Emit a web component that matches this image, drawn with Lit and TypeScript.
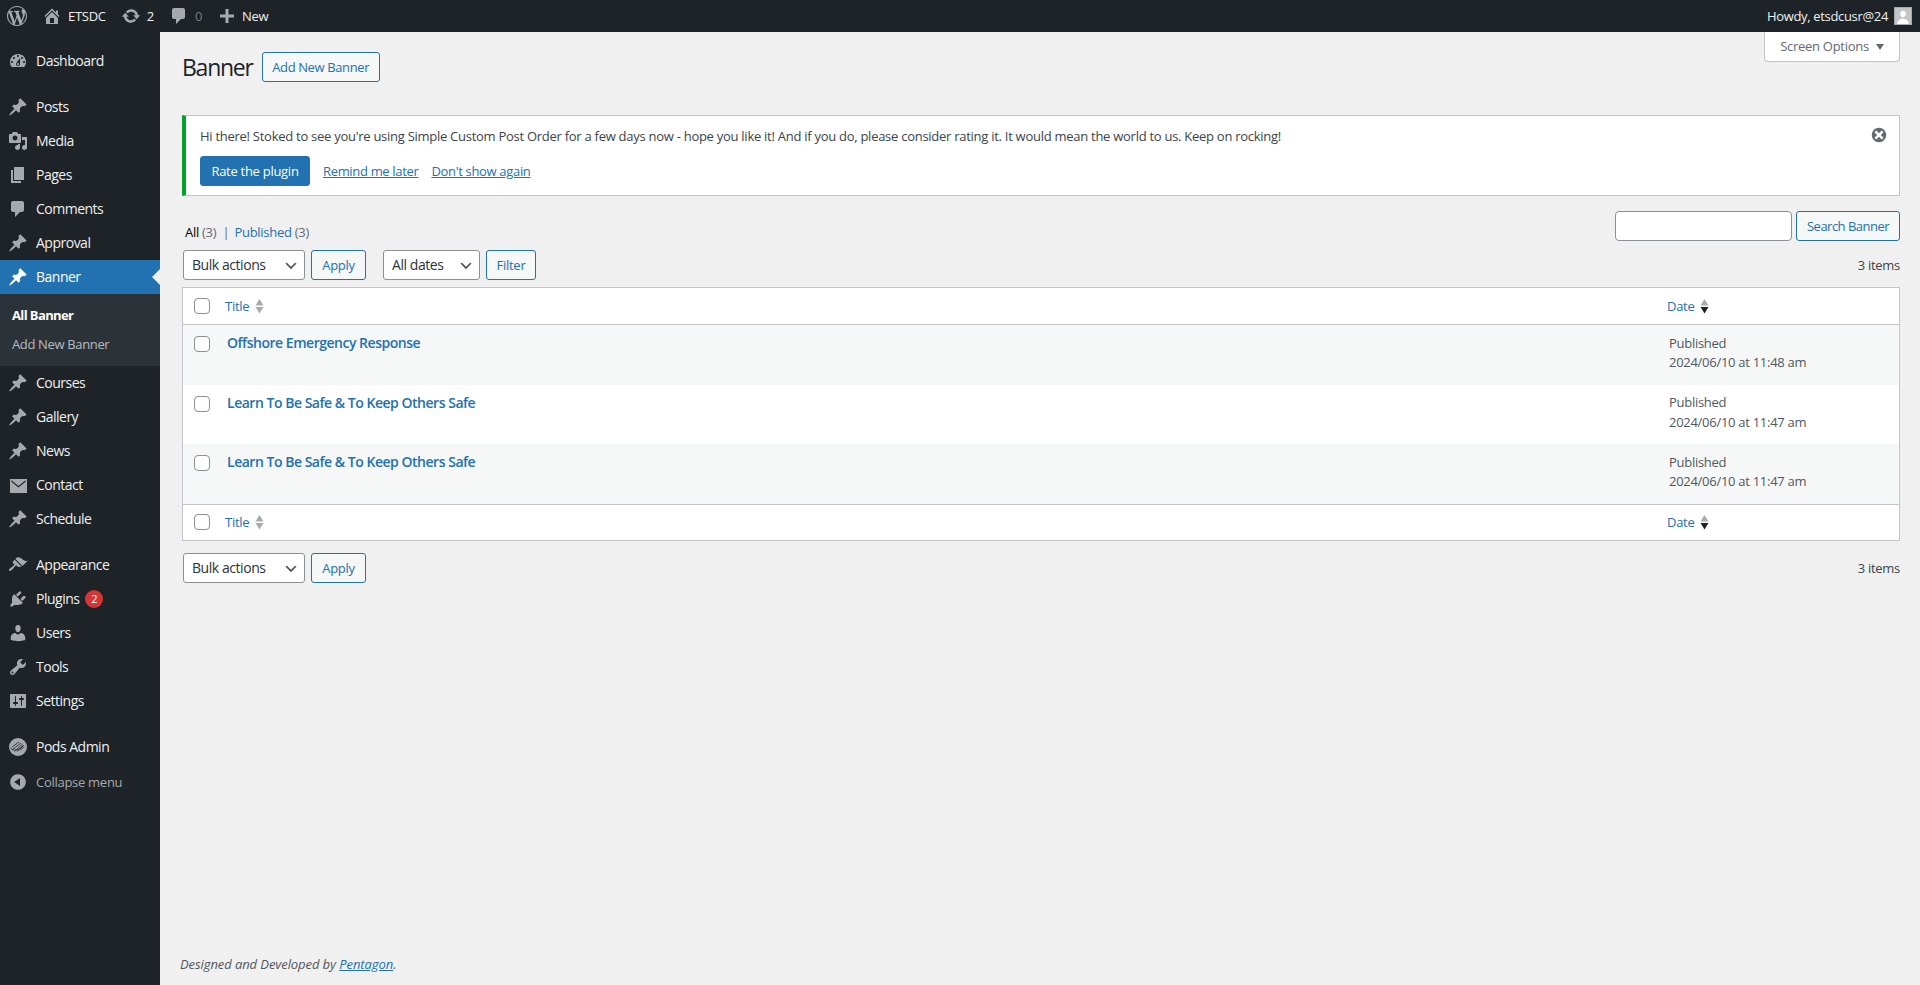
import { LitElement, html, css } from "lit";
import { customElement } from "lit/decorators.js";

const PIN = "M10.44 3.02l1.82-1.82 6.36 6.35-1.83 1.82c-1.05-.68-2.48-.57-3.41.36l-.75.75c-.92.93-1.04 2.35-.35 3.41l-1.83 1.82-2.41-2.41-2.8 2.79c-.42.42-3.38 2.71-3.8 2.29s1.86-3.39 2.28-3.81l2.79-2.79L4.1 9.36l1.83-1.82c1.05.69 2.48.57 3.4-.36l.75-.75c.93-.92 1.05-2.35.36-3.41z";
const I: Record<string, string> = {
  pin: PIN,
  media: "M13 11V4c0-.55-.45-1-1-1h-1.67L9 1H5L3.67 3H2c-.55 0-1 .45-1 1v7c0 .55.45 1 1 1h10c.55 0 1-.45 1-1zM7 4.5c1.38 0 2.5 1.12 2.5 2.5S8.38 9.5 7 9.5 4.5 8.38 4.5 7 5.62 4.5 7 4.5zM14 6h5v10.5c0 1.38-1.12 2.5-2.5 2.5S14 17.88 14 16.5s1.12-2.5 2.5-2.5c.17 0 .34.02.5.05V9h-3V6zm-4 8.05V13h2v3.5c0 1.38-1.12 2.5-2.5 2.5S7 17.88 7 16.5 8.12 14 9.5 14c.17 0 .34.02.5.05z",
  page: "M6 15V2h10v13H6zm-1 1h8v2H3V5h2v11z",
  comment: "M5 2h9c1.1 0 2 .9 2 2v7c0 1.1-.9 2-2 2h-2l-5 5v-5H5c-1.1 0-2-.9-2-2V4c0-1.1.9-2 2-2z",
  dash: "M3.76 16h12.48c1.1-1.37 1.76-3.11 1.76-5 0-4.42-3.58-8-8-8s-8 3.58-8 8c0 1.89.66 3.63 1.76 5zM10 4c.55 0 1 .45 1 1s-.45 1-1 1-1-.45-1-1 .45-1 1-1zM6 6c.55 0 1 .45 1 1s-.45 1-1 1-1-.45-1-1 .45-1 1-1zm8 0c.55 0 1 .45 1 1s-.45 1-1 1-1-.45-1-1 .45-1 1-1zm-5.37 5.55L12 7v6c0 1.1-.9 2-2 2s-2-.9-2-2c0-.57.24-1.08.63-1.45zM4 10c.55 0 1 .45 1 1s-.45 1-1 1-1-.45-1-1 .45-1 1-1zm12 0c.55 0 1 .45 1 1s-.45 1-1 1-1-.45-1-1 .45-1 1-1zm-5 3c0-.55-.45-1-1-1s-1 .45-1 1 .45 1 1 1 1-.45 1-1z",
  mail: "M2 4h17v14H2zM3.4 5.200 10.500 11 17.600 5.200V6.800L10.500 12.600 3.400 6.800z",
  brush: "M14.48 11.06L7.41 3.99l1.5-1.5c.5-.56 2.3-.47 3.51.32 1.21.8 1.43 1.28 2.91 2.1 1.18.64 2.45 1.26 4.45.85zm-.71.71L6.7 4.7 4.93 6.47c-.39.39-.39 1.02 0 1.41l1.06 1.06c.39.39.39 1.03 0 1.42-.6.6-1.43 1.11-2.21 1.69-.35.26-.7.53-1.01.84C1.43 13.23.4 14.79 1.2 15.6c.8.8 2.36-.23 3.71-1.57.31-.31.58-.66.85-1.02.57-.78 1.08-1.61 1.69-2.21.39-.39 1.02-.39 1.41 0l1.06 1.06c.39.39 1.02.39 1.41 0z",
  plug: "M13.11 4.36L9.87 7.6 8 5.73l3.24-3.24c.35-.34 1.05-.2 1.56.32.52.51.66 1.21.31 1.55zm-8 1.77l.91-1.12 9.01 9.01-1.19.84c-.71.71-2.63 1.16-3.82 1.16H6.14L4.9 17.26c-.59.59-1.54.59-2.12 0-.59-.58-.59-1.53 0-2.12l1.24-1.24v-3.88c0-1.13.4-3.19 1.09-3.89zm7.26 3.97l3.24-3.24c.34-.35 1.04-.21 1.55.31.52.51.66 1.21.31 1.55l-3.24 3.25z",
  user: "M10 9.25c-2.27 0-2.73-3.44-2.73-3.44C7 4.02 7.82 2 9.97 2c2.16 0 2.98 2.02 2.71 3.81 0 0-.41 3.44-2.68 3.44zm0 2.57L12.72 10c2.39 0 4.52 2.33 4.52 4.53v2.49s-3.65 1.13-7.24 1.13c-3.65 0-7.24-1.13-7.24-1.13v-2.49c0-2.25 1.94-4.48 4.47-4.48z",
  tool: "M16.68 9.77c-1.34 1.34-3.3 1.67-4.95.99l-5.41 6.52c-.99.99-2.59.99-3.58 0s-.99-2.59 0-3.57l6.52-5.42c-.68-1.65-.35-3.61.99-4.95 1.28-1.28 3.12-1.62 4.72-1.06l-2.89 2.89 2.82 2.82 2.86-2.87c.53 1.58.18 3.39-1.08 4.65zM3.81 16.21c.4.39 1.04.39 1.43 0 .4-.4.4-1.04 0-1.43-.39-.4-1.03-.4-1.43 0-.39.39-.39 1.03 0 1.43z",
  gear: "M18 16V4c0-.55-.45-1-1-1H3c-.55 0-1 .45-1 1v12c0 .55.45 1 1 1h14c.55 0 1-.45 1-1zM8 11h1c.55 0 1 .45 1 1s-.45 1-1 1H8v1.5c0 .28-.22.5-.5.5s-.5-.22-.5-.5V13H6c-.55 0-1-.45-1-1s.45-1 1-1h1V5.5c0-.28.22-.5.5-.5s.5.22.5.5V11zm5-2h-1c-.55 0-1-.45-1-1s.45-1 1-1h1V5.5c0-.28.22-.5.5-.5s.5.22.5.5V7h1c.55 0 1 .45 1 1s-.45 1-1 1h-1v5.5c0 .28-.22.5-.5.5s-.5-.22-.5-.5V9z",
  collapse: "M10 2.16c4.33 0 7.84 3.51 7.84 7.84s-3.51 7.84-7.84 7.84S2.16 14.33 2.16 10 5.71 2.16 10 2.16zm2 11.72V6.12L6.18 9.97z",
  home: "M16 8.5l1.53 1.53-1.06 1.06L10 4.62l-6.47 6.47-1.06-1.06L10 2.5l4 4v-2h2v4zm-6-2.46l6 5.99V18H4v-5.97zM12 17v-5H8v5h4z",
  update: "M10.2 3.28c3.53 0 6.43 2.61 6.92 6h2.08l-3.5 4-3.5-4h2.32c-.45-1.97-2.21-3.45-4.32-3.45-1.45 0-2.73.71-3.54 1.78L4.95 5.66C6.23 4.2 8.11 3.28 10.2 3.28zm-.4 13.44c-3.52 0-6.43-2.61-6.92-6H.8l3.5-4c1.17 1.33 2.33 2.67 3.5 4H5.48c.45 1.97 2.21 3.45 4.32 3.45 1.45 0 2.73-.71 3.54-1.78l1.71 1.95c-1.28 1.46-3.15 2.38-5.25 2.38z",
  plus: "M17 8.500v3h-5.500V17h-3v-5.500H3v-3h5.500V3h3v5.500z",
  wp: "M20 10c0-5.51-4.49-10-10-10C4.48 0 0 4.49 0 10c0 5.52 4.48 10 10 10 5.51 0 10-4.48 10-10zM7.78 15.37L4.37 6.22c.55-.02 1.17-.08 1.17-.08.5-.06.44-1.13-.06-1.11 0 0-1.45.11-2.37.11-.18 0-.37 0-.58-.01C4.12 2.69 6.87 1.11 10 1.11c2.33 0 4.45.87 6.05 2.34-.68-.11-1.65.39-1.65 1.58 0 .74.45 1.36.9 2.1.35.61.55 1.36.55 2.46 0 1.49-1.4 5-1.4 5l-3.03-8.37c.54-.02.82-.17.82-.17.5-.05.44-1.25-.06-1.22 0 0-1.44.12-2.38.12-.87 0-2.33-.12-2.33-.12-.5-.03-.56 1.2-.06 1.22l.92.08 1.26 3.41zM17.41 10c.24-.64.74-1.87.43-4.25.7 1.29 1.05 2.71 1.05 4.25 0 3.29-1.73 6.24-4.4 7.78.97-2.59 1.94-5.2 2.92-7.78zM6.1 18.09C3.12 16.65 1.11 13.53 1.11 10c0-1.3.23-2.48.72-3.59C3.25 10.3 4.67 14.2 6.1 18.09zm4.03-6.63l2.58 6.98c-.86.29-1.76.45-2.71.45-.79 0-1.57-.11-2.29-.33.81-2.38 1.62-4.74 2.42-7.1z",
  dismiss: "M10 2c4.42 0 8 3.58 8 8s-3.58 8-8 8-8-3.58-8-8 3.58-8 8-8zm5 11l-3-3 3-3-2-2-3 3-3-3-2 2 3 3-3 3 2 2 3-3 3 3z",
};

const icon = (n: string, size = 20) =>
  html`<svg class="ic" width=${size} height=${size} viewBox="0 0 20 20" fill="currentColor"><path fill-rule="evenodd" d=${I[n]}></path></svg>`;

const podsIcon = html`<svg class="ic" width="20" height="20" viewBox="0 0 20 20">
  <circle cx="10" cy="10" r="9" fill="currentColor"></circle>
  <path d="M2.500 11c3 3 8 3.500 13-3M4 13l9-7M6.500 14.500l8-7.500M9 14.500l6.500-6M12 13.500l4-4M4 10l7-5" fill="none" stroke="#1d2327" stroke-width=".8"></path>
</svg>`;

const sortIcon = (active: boolean) => html`<svg class="sort" width="9" height="16" viewBox="0 0 9 16">
  <path d="M4.500 1 8.500 7.500H.5z" fill="#a7aaad"></path>
  <path d="M.5 9h8l-4 6.500z" fill=${active ? "#1d2327" : "#a7aaad"}></path>
</svg>`;

type Item = { l: string; i: string; cur?: boolean; badge?: string; sep?: boolean };
const MENU: Item[] = [
  { l: "Dashboard", i: "dash", sep: true },
  { l: "Posts", i: "pin" },
  { l: "Media", i: "media" },
  { l: "Pages", i: "page" },
  { l: "Comments", i: "comment" },
  { l: "Approval", i: "pin" },
  { l: "Banner", i: "pin", cur: true },
  { l: "Courses", i: "pin" },
  { l: "Gallery", i: "pin" },
  { l: "News", i: "pin" },
  { l: "Contact", i: "mail" },
  { l: "Schedule", i: "pin", sep: true },
  { l: "Appearance", i: "brush" },
  { l: "Plugins", i: "plug", badge: "2" },
  { l: "Users", i: "user" },
  { l: "Tools", i: "tool" },
  { l: "Settings", i: "gear", sep: true },
  { l: "Pods Admin", i: "pods" },
];

const ROWS = [
  { t: "Offshore Emergency Response", d: "2024/06/10 at 11:48 am", alt: true },
  { t: "Learn To Be Safe & To Keep Others Safe", d: "2024/06/10 at 11:47 am", alt: false },
  { t: "Learn To Be Safe & To Keep Others Safe", d: "2024/06/10 at 11:47 am", alt: true },
];

@customElement("app-root")
export class AppRoot extends LitElement {
  static styles = css`
    :host {
      display: flex;
      flex-direction: column;
      height: 100vh;
      overflow: hidden;
      background: #f0f0f1;
      color: #3c434a;
      font: 13px/1.4 "Open Sans", "Noto Sans", sans-serif;
      letter-spacing: -0.28px;
    }
    * { box-sizing: border-box; }
    a { color: #2271b1; text-decoration: none; }
    .ic { display: block; flex: none; }

    .bar { height: 32px; background: #1d2327; color: #f0f0f1; display: flex; align-items: center; justify-content: space-between; flex: none; }
    .bar-l, .bar-r { display: flex; align-items: center; height: 100%; }
    .bi { display: flex; align-items: center; height: 100%; color: #f0f0f1; gap: 6px; }
    .bi .ic { color: #a7aaad; }
    .bi.wp { padding: 0 7px; margin-right: 8px; }
    .bi.site { margin-right: 15px; }
    .bi.upd { margin-right: 15px; }
    .bi.cm { margin-right: 15px; }
    .bi.cm span { color: #787c82; }
    .bi.new { gap: 5px; }
    .bi.me { padding-right: 8px; letter-spacing: -0.33px; }
    .avatar { width: 18px; height: 18px; background: #c3c4c7; border: 1px solid #a7aaad; display: block; }

    .main { flex: 1; display: flex; min-height: 0; }
    .side { width: 160px; background: #1d2327; flex: none; padding-top: 12px; }
    .mi { height: 34px; display: flex; align-items: center; color: #f0f0f1; font-size: 14px; letter-spacing: -0.5px; position: relative; }
    .mi .wrap { width: 36px; display: flex; justify-content: center; color: #a7aaad; flex: none; }
    .mi.cur { background: #2271b1; color: #fff; }
    .mi.cur .wrap { color: #fff; }
    .mi.cur::after { content: ""; position: absolute; right: 0; top: 50%; margin-top: -8px; border: 8px solid transparent; border-right-color: #f0f0f1; }
    .sep { height: 12px; }
    .sub { background: #2c3338; padding: 7px 0 8px; font-size: 13px; }
    .sub a { display: block; height: 28.5px; line-height: 28.5px; padding-left: 12px; color: rgba(240,246,252,.7); letter-spacing: -0.35px; }
    .sub a.on { color: #fff; font-weight: 700; letter-spacing: -0.62px; }
    .badge { width: 18px; height: 18px; border-radius: 9px; background: #d63638; color: #fff; font-size: 11px; line-height: 18px; text-align: center; margin-left: 6px; letter-spacing: 0; }
    .collapse { height: 36px; display: flex; align-items: center; color: #a7aaad; font-size: 13px; }
    .collapse .wrap { width: 36px; display: flex; justify-content: center; flex: none; }

    .content { flex: 1; min-width: 0; padding: 0 20px; display: flex; flex-direction: column; }
    .top { display: flex; justify-content: space-between; align-items: flex-start; height: 83px; flex: none; }
    .head { display: flex; align-items: center; padding: 20px 0 0 2px; gap: 9px; }
    h1 { margin: 0; font-size: 23px; font-weight: 400; line-height: 30px; color: #1d2327; letter-spacing: -1.25px; }
    .btn { display: inline-flex; align-items: center; justify-content: center; height: 30px; padding: 0 4px; border: 1px solid #2271b1; border-radius: 3px; background: #f6f7f7; color: #2271b1; font-size: 13px; flex: none; }
    .btn.pri { background: #2271b1; color: #fff; width: 110px; }
    .btn.add { width: 118px; letter-spacing: -0.38px; }
    .btn.srch { width: 104px; letter-spacing: -0.52px; }
    .btn.apply { width: 55px; }
    .btn.filter { width: 50px; }
    .screen { width: 136px; height: 30px; background: #fff; border: 1px solid #c3c4c7; border-top: none; border-radius: 0 0 4px 4px; display: flex; align-items: center; justify-content: center; gap: 7px; color: #646970; }
    .tri { width: 0; height: 0; border: 4.5px solid transparent; border-top: 6px solid #646970; border-bottom: none; }

    .notice { margin-left: 2px; height: 81px; background: #fff; border: 1px solid #c3c4c7; border-left: 4px solid #00a32a; padding: 10px 14px; display: flex; justify-content: space-between; flex: none; }
    .notice p { margin: 0 0 10px; line-height: 20px; letter-spacing: -0.27px; }
    .nrow { display: flex; align-items: center; gap: 13px; }
    .nrow a.u { text-decoration: underline; letter-spacing: -0.33px; }
    .close { color: #646970; margin-right: -3px; }

    .views-row { display: flex; justify-content: space-between; align-items: flex-start; height: 39px; margin-top: 15px; padding-left: 3px; flex: none; }
    .views { padding: 11px 0 0 2px; line-height: 20px; color: #646970; }
    .views b { font-weight: 400; color: #000; }
    .views .pipe { margin: 0 2px 0 3px; }
    .search { display: flex; gap: 4px; }
    .search input { width: 177px; height: 30px; border: 1px solid #8c8f94; border-radius: 4px; background: #fff; }

    .nav { display: flex; align-items: center; height: 30px; padding-left: 3px; justify-content: space-between; flex: none; }
    .nav .l { display: flex; align-items: center; gap: 6px; }
    .sel { height: 30px; border: 1px solid #8c8f94; border-radius: 3px; background: #fff url("data:image/svg+xml,%3Csvg xmlns='http://www.w3.org/2000/svg' width='20' height='20'%3E%3Cpath d='M5 6l5 5 5-5 2 1-7 7-7-7z' fill='%23555'/%3E%3C/svg%3E") no-repeat right 5px top 55%; background-size: 16px 16px; color: #2c3338; font: inherit; font-size: 14px; letter-spacing: -0.44px; padding: 0 24px 0 8px; appearance: none; -webkit-appearance: none; margin: 0; }
    .sel.bulk { width: 122px; }
    .sel.dates { width: 97px; margin-left: 11px; }

    .tbl { margin: 7px 0 12px 2px; border: 1px solid #c3c4c7; background: #fff; flex: none; }
    .tr { display: grid; grid-template-columns: 1fr 232px; }
    .tr.hd { height: 37px; border-bottom: 1px solid #c3c4c7; align-items: center; }
    .tr.ft { height: 36.5px; border-top: 1px solid #c3c4c7; align-items: center; }
    .tr.row { height: 59.5px; }
    .tr.alt { background: #f6f7f7; }
    .cell { display: flex; align-items: center; }
    .cell.t { padding-left: 11px; }
    .cb { width: 16px; height: 16px; border: 1px solid #8c8f94; border-radius: 4px; background: #fff; flex: none; }
    .t .lbl { margin-left: 15px; }
    .sort { margin-left: 6px; display: block; }
    .row .cell { align-items: flex-start; padding-top: 8px; }
    .row .cb { margin-top: 3px; }
    .row .name { margin-left: 17px; font-size: 14px; font-weight: 600; line-height: 19px; letter-spacing: -0.48px; }
    .row .dc { display: block; padding-left: 2px; line-height: 19.5px; color: #50575e; padding-top: 8.5px; }

    .foot { margin-top: auto; padding: 0 0 12px; font-style: italic; color: #50575e; letter-spacing: -0.08px; flex: none; }
    .foot a { text-decoration: underline; }
  `;

  private head(cls: string) {
    return html`<div class="tr ${cls}">
      <div class="cell t"><span class="cb"></span><a class="lbl" href="#">Title</a>${sortIcon(false)}</div>
      <div class="cell dc"><a href="#">Date</a>${sortIcon(true)}</div>
    </div>`;
  }

  render() {
    return html`
      <div class="bar">
        <div class="bar-l">
          <a class="bi wp">${icon("wp")}</a>
          <a class="bi site">${icon("home")}ETSDC</a>
          <a class="bi upd">${icon("update")}2</a>
          <a class="bi cm">${icon("comment")}<span>0</span></a>
          <a class="bi new">${icon("plus")}New</a>
        </div>
        <div class="bar-r">
          <a class="bi me">Howdy, etsdcusr@24
            <svg class="avatar" viewBox="0 0 18 18"><path d="M9 3c2 0 3.200 1.600 3.200 3.600S11 10.500 9 10.500 5.800 8.600 5.800 6.600 7 3 9 3zM2.500 18c0-4 3-6 6.500-6s6.500 2 6.500 6z" fill="#fff"></path></svg>
          </a>
        </div>
      </div>
      <div class="main">
        <nav class="side">
          ${MENU.map(m => html`
            <a class="mi ${m.cur ? "cur" : ""}">
              <span class="wrap">${m.i === "pods" ? podsIcon : icon(m.i)}</span>${m.l}${m.badge ? html`<span class="badge">${m.badge}</span>` : ""}
            </a>
            ${m.cur ? html`<div class="sub"><a class="on">All Banner</a><a>Add New Banner</a></div>` : ""}
            ${m.sep ? html`<div class="sep"></div>` : ""}
          `)}
          <div class="collapse"><span class="wrap">${icon("collapse")}</span>Collapse menu</div>
        </nav>
        <section class="content">
          <div class="top">
            <div class="head"><h1>Banner</h1><a class="btn add">Add New Banner</a></div>
            <div class="screen">Screen Options <span class="tri"></span></div>
          </div>
          <div class="notice">
            <div>
              <p>Hi there! Stoked to see you're using Simple Custom Post Order for a few days now - hope you like it! And if you do, please consider rating it. It would mean the world to us. Keep on rocking!</p>
              <div class="nrow"><a class="btn pri">Rate the plugin</a><a class="u">Remind me later</a><a class="u">Don't show again</a></div>
            </div>
            <span class="close">${icon("dismiss", 18)}</span>
          </div>
          <div class="views-row">
            <div class="views"><b>All</b> (3) <span class="pipe">|</span> <a>Published</a> (3)</div>
            <div class="search"><input type="text" /><a class="btn srch">Search Banner</a></div>
          </div>
          <div class="nav">
            <div class="l">
              <select class="sel bulk"><option>Bulk actions</option></select>
              <a class="btn apply">Apply</a>
              <select class="sel dates"><option>All dates</option></select>
              <a class="btn filter">Filter</a>
            </div>
            <span class="count">3 items</span>
          </div>
          <div class="tbl">
            ${this.head("hd")}
            ${ROWS.map(r => html`<div class="tr row ${r.alt ? "alt" : ""}">
              <div class="cell t"><span class="cb"></span><a class="name">${r.t}</a></div>
              <div class="dc">Published<br />${r.d}</div>
            </div>`)}
            ${this.head("ft")}
          </div>
          <div class="nav">
            <div class="l">
              <select class="sel bulk"><option>Bulk actions</option></select>
              <a class="btn apply">Apply</a>
            </div>
            <span class="count">3 items</span>
          </div>
          <div class="foot">Designed and Developed by <a>Pentagon</a>.</div>
        </section>
      </div>
    `;
  }
}
